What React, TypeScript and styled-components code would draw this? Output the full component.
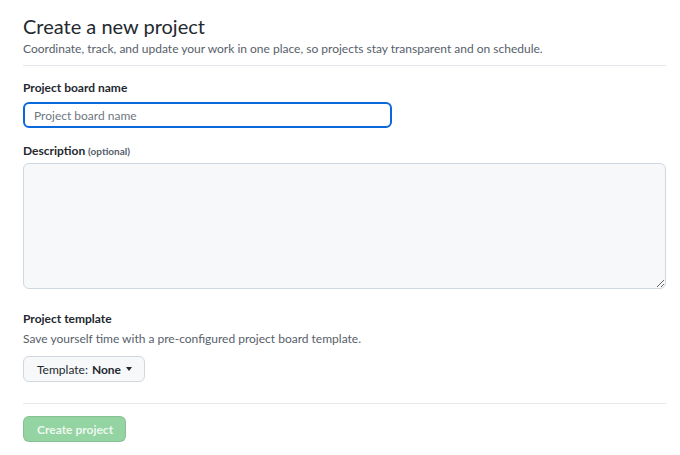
import React from "react";
import styled, { createGlobalStyle } from "styled-components";

const Global = createGlobalStyle`
  html, body { margin: 0; padding: 0; background: #ffffff; }
  body { font-family: Lato, "Noto Sans", "Liberation Sans", sans-serif; color: #24292f; }
  * { box-sizing: border-box; }
`;

const Page = styled.div`
  padding: 12px 14px 0 23px;
`;

const Header = styled.div`
  padding-bottom: 7px;
  border-bottom: 1px solid #e4e7eb;
  margin-bottom: 12px;
`;

const Title = styled.h1`
  margin: 0;
  font-size: 20px;
  font-weight: 400;
  line-height: 28px;
  color: #24292f;
`;

const Lead = styled.p`
  margin: 0;
  font-size: 12px;
  line-height: 18px;
  color: #57606a;
`;

const Field = styled.div<{ $gap?: number }>`
  display: flex;
  flex-direction: column;
  margin-bottom: ${(p) => p.$gap ?? 13}px;
`;

const Label = styled.label<{ $space?: number }>`
  font-size: 12px;
  font-weight: 700;
  line-height: 20px;
  margin-bottom: ${(p) => p.$space ?? 4}px;
  color: #24292f;
`;

const Optional = styled.span`
  font-size: 10px;
  font-weight: 700;
  color: #57606a;
`;

const TextInput = styled.input`
  width: 369px;
  height: 26px;
  padding: 3px 9px;
  font-family: inherit;
  font-size: 12px;
  border: 2px solid #0969da;
  border-radius: 6px;
  outline: none;
  background: #fff;
  color: #24292f;
  &::placeholder { color: #6e7781; }
`;

const TextArea = styled.textarea`
  display: block;
  width: 100%;
  height: 126px;
  padding: 6px 9px;
  font-family: inherit;
  font-size: 12px;
  border: 1px solid #d0d7de;
  border-radius: 6px;
  background: #f6f8fa;
  resize: vertical;
  outline: none;
`;

const Note = styled.p`
  margin: 0 0 7px;
  font-size: 12px;
  line-height: 20px;
  color: #57606a;
`;

const SelectButton = styled.button`
  display: inline-flex;
  align-items: center;
  gap: 4px;
  height: 26px;
  padding: 0 12px 0 13px;
  font-family: inherit;
  font-size: 12px;
  color: #24292f;
  background: #f6f8fa;
  border: 1px solid #d0d7de;
  border-radius: 6px;
  cursor: pointer;
`;

const Strong = styled.b`
  font-weight: 700;
`;

const Caret = styled.span`
  display: inline-block;
  width: 0;
  height: 0;
  border-left: 3.5px solid transparent;
  border-right: 3.5px solid transparent;
  border-top: 4px solid #24292f;
  margin-left: 1px;
`;

const Divider = styled.hr`
  border: 0;
  border-top: 1px solid #e4e7eb;
  margin: 21px 0 12px;
`;

const Primary = styled.button`
  height: 26px;
  padding: 0 12px 0 13px;
  font-family: inherit;
  font-size: 12px;
  font-weight: 700;
  color: rgba(255, 255, 255, 0.85);
  background: #94d3a2;
  border: 1px solid rgba(27, 31, 36, 0.1);
  border-radius: 6px;
  white-space: nowrap;
`;

export default function App() {
  return (
    <>
      <Global />
      <Page>
        <Header>
          <Title>Create a new project</Title>
          <Lead>
            Coordinate, track, and update your work in one place, so projects stay transparent and on schedule.
          </Lead>
        </Header>
        <Field>
          <Label>Project board name</Label>
          <TextInput placeholder="Project board name" autoFocus />
        </Field>
        <Field $gap={20}>
          <Label $space={2}>
            Description <Optional>(optional)</Optional>
          </Label>
          <TextArea />
        </Field>
        <Field $gap={0}>
          <Label $space={0}>Project template</Label>
          <Note>Save yourself time with a pre-configured project board template.</Note>
          <div>
            <SelectButton>
              Template: <Strong>None</Strong>
              <Caret />
            </SelectButton>
          </div>
        </Field>
        <Divider />
        <Primary disabled>Create project</Primary>
      </Page>
    </>
  );
}
